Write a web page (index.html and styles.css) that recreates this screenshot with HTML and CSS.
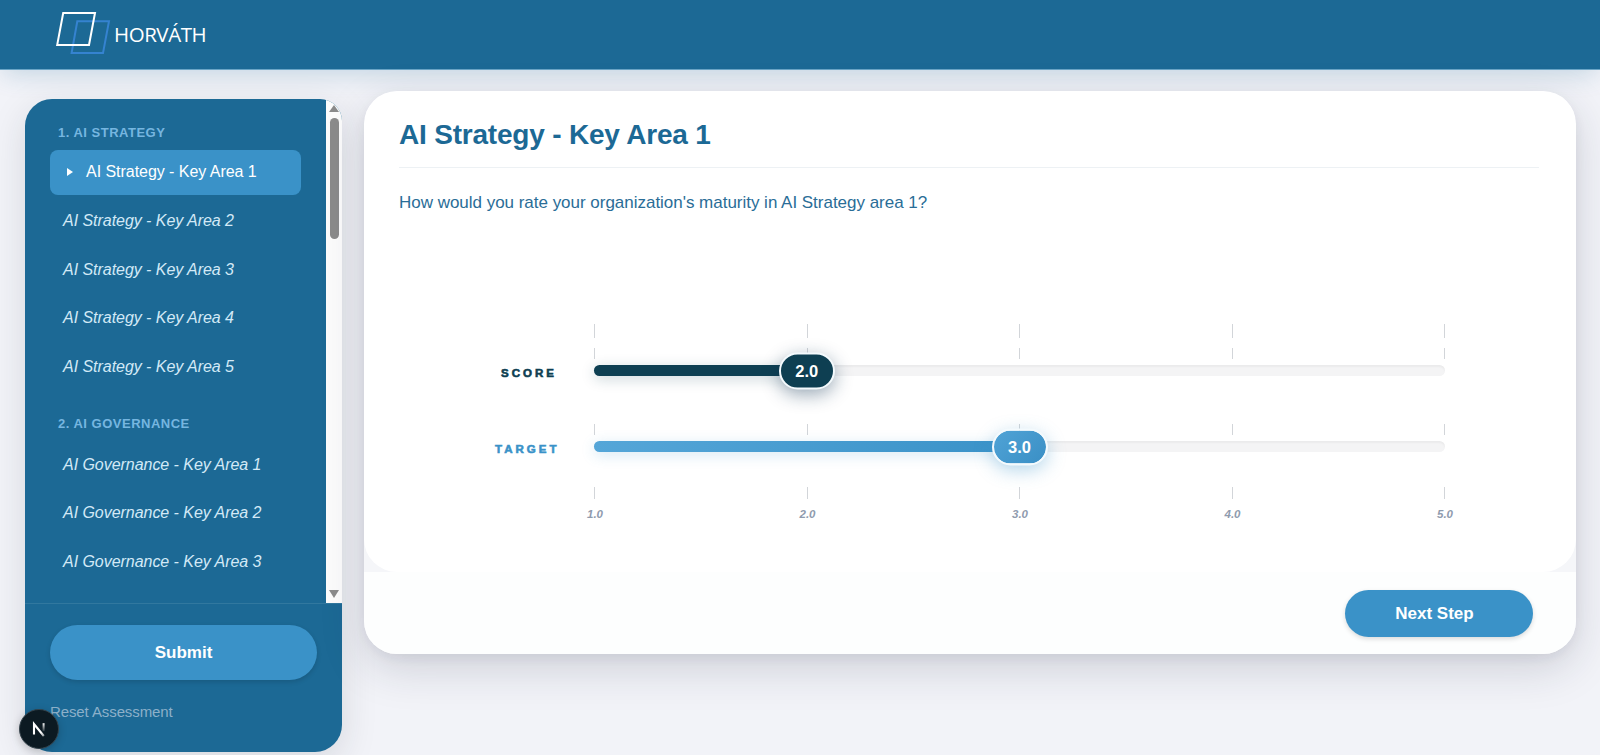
FILE: index.html
```html
<!DOCTYPE html>
<html lang="en">

<head>
  <meta charset="UTF-8" />
  <meta name="viewport" content="width=device-width, initial-scale=1.0"/>
  <title>AI Maturity Assessment</title>
  <link rel="stylesheet" href="styles.css">
</head>

<body>
  <header class="header">
    <svg class="logo-mark" width="56" height="44" viewBox="0 0 56 44" fill="none">
      <path d="M22.3 9.2H54L48 41.1H16.6Z" stroke="#3583d0" stroke-width="2"/>
      <path d="M8.2 1H40L34 32.9H2.2Z" stroke="#fff" stroke-width="2"/>
    </svg>
    <span class="logo-text">HORVÁTH</span>
  </header>

  <div class="layout">
    <aside class="sidebar">
      <div class="nav-wrap">
        <nav class="nav">
          <h3 class="nav-title">1. AI STRATEGY</h3>
          <a class="nav-item active"><span class="arrow"></span>AI Strategy - Key Area 1</a>
          <a class="nav-item">AI Strategy - Key Area 2</a>
          <a class="nav-item">AI Strategy - Key Area 3</a>
          <a class="nav-item">AI Strategy - Key Area 4</a>
          <a class="nav-item">AI Strategy - Key Area 5</a>
          <h3 class="nav-title second">2. AI GOVERNANCE</h3>
          <a class="nav-item">AI Governance - Key Area 1</a>
          <a class="nav-item">AI Governance - Key Area 2</a>
          <a class="nav-item">AI Governance - Key Area 3</a>
        </nav>
        <div class="scrollbar">
          <span class="scroll-up"></span>
          <span class="scroll-thumb"></span>
          <span class="scroll-down"></span>
        </div>
      </div>
      <div class="sidebar-footer">
        <button class="submit">Submit</button>
        <a class="reset">Reset Assessment</a>
      </div>
    </aside>

    <main class="card">
      <section class="card-body">
        <h1 class="title">AI Strategy - Key Area 1</h1>
        <p class="question">How would you rate your organization's maturity in AI Strategy area 1?</p>

        <div class="sliders">
          <div class="ticks tall"><i></i><i></i><i></i><i></i><i></i></div>
          <div class="ticks score-ticks"><i></i><i></i><i></i><i></i><i></i></div>
          <div class="slider score">
            <span class="label">SCORE</span>
            <div class="track">
              <div class="fill" style="width: 25%"></div>
              <div class="thumb" style="left: 25%">2.0</div>
            </div>
          </div>
          <div class="ticks target-ticks"><i></i><i></i><i></i><i></i><i></i></div>
          <div class="slider target">
            <span class="label">TARGET</span>
            <div class="track">
              <div class="fill" style="width: 50%"></div>
              <div class="thumb" style="left: 50%">3.0</div>
            </div>
          </div>
          <div class="ticks bottom-ticks"><i></i><i></i><i></i><i></i><i></i></div>
          <div class="scale">
            <span>1.0</span><span>2.0</span><span>3.0</span><span>4.0</span><span>5.0</span>
          </div>
        </div>
      </section>
      <footer class="card-footer">
        <button class="next">Next Step</button>
      </footer>
    </main>
  </div>

  <div class="dev-badge">
    <svg width="16" height="16" viewBox="0 0 16 16" fill="none">
      <path d="M3 13.5V3L12.8 15" stroke="url(#fade1)" stroke-width="2.1"/>
      <path d="M12.6 2.2v8" stroke="url(#fade2)" stroke-width="2"/>
      <defs>
        <linearGradient id="fade1" x1="5" y1="5" x2="14" y2="15" gradientUnits="userSpaceOnUse">
          <stop offset="0.6" stop-color="#fff"/>
          <stop offset="1" stop-color="#fff" stop-opacity="0.5"/>
        </linearGradient>
        <linearGradient id="fade2" x1="12" y1="2" x2="12" y2="10.5" gradientUnits="userSpaceOnUse">
          <stop stop-color="#fff"/>
          <stop offset="1" stop-color="#fff" stop-opacity="0.1"/>
        </linearGradient>
      </defs>
    </svg>
  </div>
</body>

</html>
```

FILE: styles.css
```css
* {
  margin: 0;
  padding: 0;
  box-sizing: border-box;
}

:root {
  --blue: #1c6995;
  --light-blue: #3a92c8;
  --dark: #0e3f52;
  --bg: #f2f3f8;
}

body {
  height: 755px;
  overflow: hidden;
  font-family: "Liberation Sans", Arial, sans-serif;
  background-color: var(--bg);
}

.header {
  height: 70px;
  display: flex;
  align-items: flex-start;
  padding: 12px 0 0 55px;
  background-color: var(--blue);
  border-bottom: 1px solid #6aa5c6;
  box-shadow: 0 8px 24px -4px rgba(28, 105, 149, 0.22);
}

.logo-text {
  margin-left: 3px;
  padding-top: 8px;
  font-family: "Open Sans", sans-serif;
  font-size: 20.5px;
  line-height: 28px;
  letter-spacing: -0.45px;
  color: #fff;
}

.layout {
  display: flex;
  align-items: flex-start;
  gap: 22px;
  padding: 21px 24px 0 25px;
}

.sidebar {
  width: 317px;
  height: 653px;
  margin-top: 8px;
  display: flex;
  flex-direction: column;
  border-radius: 27px 22px 27px 27px;
  overflow: hidden;
  background-color: var(--blue);
  box-shadow: 0 10px 36px rgba(30, 35, 50, 0.13);
}

.nav-wrap {
  height: 504px;
  display: flex;
}

.nav {
  flex: 1;
  padding: 25px 25px 0;
}

.nav-title {
  padding-left: 8px;
  font-size: 13px;
  line-height: 18px;
  letter-spacing: 0.5px;
  color: #76b6e0;
}

.nav-title.second {
  margin-top: 26px;
}

.nav-item {
  display: flex;
  align-items: center;
  height: 44.7px;
  margin-bottom: 4px;
  padding-left: 13px;
  font-size: 16px;
  font-style: italic;
  letter-spacing: -0.04px;
  color: #d3e9f7;
}

.nav-title + .nav-item {
  margin-top: 8px;
}

.nav-title.second + .nav-item {
  margin-top: 9px;
}

.nav-item.active {
  padding-left: 17px;
  border-radius: 8px;
  font-style: normal;
  color: #fff;
  background-color: var(--light-blue);
}

.arrow {
  margin-right: 13px;
  border-left: 6px solid #fff;
  border-top: 4.5px solid transparent;
  border-bottom: 4.5px solid transparent;
}

.scrollbar {
  width: 16px;
  display: flex;
  flex-direction: column;
  align-items: center;
  padding: 6px 0 5px;
  background-color: #fcfcfc;
}

.scroll-up,
.scroll-down {
  border-left: 5.5px solid transparent;
  border-right: 5.5px solid transparent;
}

.scroll-up {
  border-bottom: 7px solid #8b8b8b;
}

.scroll-down {
  margin-top: auto;
  border-top: 8px solid #8b8b8b;
}

.scroll-thumb {
  width: 9px;
  height: 121px;
  margin-top: 6px;
  border-radius: 5px;
  background-color: #8b8b8b;
}

.sidebar-footer {
  flex: 1;
  display: flex;
  flex-direction: column;
  padding: 21px 25px 0;
  border-top: 1px solid #31789f;
}

.submit,
.next {
  border: none;
  border-radius: 28px;
  font-family: inherit;
  font-size: 17px;
  font-weight: bold;
  color: #fff;
  background-color: var(--light-blue);
  box-shadow: 0 2px 5px rgba(0, 0, 0, 0.14);
}

.submit {
  height: 55px;
  padding-top: 1px;
}

.reset {
  margin-top: 22px;
  font-size: 15px;
  line-height: 20px;
  letter-spacing: -0.1px;
  color: #8cb0c9;
}

.card {
  flex: 1;
  border-radius: 33px;
  overflow: hidden;
  background-color: #f5f6f9;
  box-shadow: 0 14px 44px rgba(30, 38, 60, 0.17), 0 4px 12px rgba(30, 38, 60, 0.06);
}

.card-body {
  height: 481px;
  padding: 26px 37px 0 35px;
  border-radius: 33px;
  background-color: #fff;
}

.title {
  height: 51px;
  font-size: 28px;
  line-height: 36px;
  letter-spacing: -0.2px;
  color: var(--blue);
  border-bottom: 1px solid #edf1f4;
}

.question {
  margin-top: 23px;
  font-size: 17px;
  line-height: 24px;
  letter-spacing: -0.02px;
  color: #2a6d97;
}

.sliders {
  width: 851px;
  margin: 109px 0 0 195px;
}

.ticks {
  height: 11px;
  display: flex;
  justify-content: space-between;
}

.ticks i {
  width: 1px;
  background-color: #d2d5d9;
}

.ticks.tall {
  height: 14px;
}

.score-ticks {
  margin-top: 10px;
}

.target-ticks {
  margin-top: 48px;
}

.bottom-ticks {
  height: 12px;
  margin-top: 35px;
}

.slider {
  display: flex;
  height: 11px;
  margin: 6px 0 0 -134px;
}

.label {
  width: 134px;
  padding: 2px 0 0 35px;
  font-size: 11.5px;
  font-weight: 900;
  line-height: 12px;
  letter-spacing: 3px;
  -webkit-text-stroke: 0.6px currentColor;
  color: var(--dark);
}

.score .label {
  padding-left: 41px;
}

.target .label {
  color: var(--light-blue);
}

.track {
  position: relative;
  flex: 1;
  border-radius: 6px;
  background-color: #f4f4f5;
  box-shadow: inset 0 2px 2px rgba(0, 0, 0, 0.04);
}

.fill {
  height: 100%;
  border-radius: 6px 0 0 6px;
  background-color: var(--dark);
  box-shadow: 0 3px 14px rgba(14, 63, 82, 0.22);
}

.thumb {
  position: absolute;
  top: 50%;
  width: 56px;
  height: 37px;
  transform: translate(-50%, -50%);
  border: 2px solid #f4fafd;
  border-radius: 19px;
  font-size: 16.5px;
  font-weight: bold;
  line-height: 32px;
  text-align: center;
  color: #fff;
  background-color: var(--dark);
  box-shadow: 0 5px 18px rgba(14, 50, 80, 0.42);
}

.target .fill {
  background: linear-gradient(90deg, #55a6d8, #3a92c8);
  box-shadow: 0 3px 14px rgba(58, 146, 200, 0.22);
}

.target .thumb {
  background: linear-gradient(135deg, #50a3d6, #3a8fc5);
  background-clip: padding-box;
  background-color: #f4fafd;
  box-shadow: 0 5px 18px rgba(58, 146, 200, 0.36);
}

.scale {
  display: flex;
  justify-content: space-between;
  margin: 8px -20px 0 -19px;
  font-size: 11.5px;
  font-weight: bold;
  font-style: italic;
  line-height: 14px;
  color: #8f9bae;
}

.scale span {
  width: 40px;
  text-align: center;
}

.card-footer {
  height: 82px;
  display: flex;
  justify-content: flex-end;
  padding: 18px 43px 0;
  background-color: #fdfefe;
}

.next {
  width: 188px;
  height: 47px;
  padding-right: 9px;
}

/* floating dev tools button */
.dev-badge {
  position: fixed;
  left: 19px;
  bottom: 6px;
  width: 40px;
  height: 40px;
  display: flex;
  justify-content: center;
  align-items: center;
  border: 1px solid #35434b;
  border-radius: 50%;
  background-color: #0c1a22;
  box-shadow: 0 2px 8px rgba(0, 0, 0, 0.2);
}
```
